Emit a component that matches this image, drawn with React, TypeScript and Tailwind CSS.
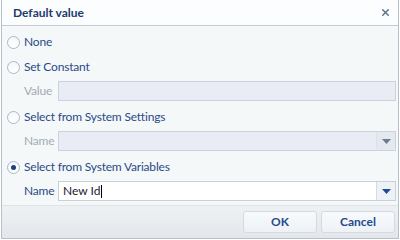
import { X } from 'lucide-react'

const FONT = "font-['Lato','Open_Sans',sans-serif]"

function Radio({ checked, label }: { checked?: boolean; label: string }) {
  return (
    <div className="flex h-[20px] items-center pl-[5px]">
      <span className="flex h-[13px] w-[13px] shrink-0 items-center justify-center rounded-full border border-[#a9b8c8] bg-gradient-to-b from-[#f4f7fa] to-[#ffffff]">
        {checked && <span className="h-[5px] w-[5px] rounded-full bg-[#1d3f7c]" />}
      </span>
      <span className="ml-[4px] text-[12px] leading-none tracking-[-0.2px] text-[#2a4a87]">{label}</span>
    </div>
  )
}

function Arrow({ enabled }: { enabled?: boolean }) {
  return (
    <svg width="9" height="5" viewBox="0 0 9 5">
      <path d="M0 0h9L4.5 5z" fill={enabled ? '#1c4e94' : '#6d7b8d'} />
    </svg>
  )
}

function Field({
  label,
  disabled,
  select,
  value,
}: {
  label: string
  disabled?: boolean
  select?: boolean
  value?: string
}) {
  return (
    <div className="flex h-[20px] items-center pl-[22px] pr-[2px]">
      <span
        className={`w-[34px] shrink-0 text-[12px] leading-none tracking-[-0.2px] ${
          disabled ? 'text-[#a3abb7]' : 'text-[#2a4a87]'
        }`}
      >
        {label}
      </span>
      <div
        className={`flex h-full flex-1 items-center border ${
          disabled ? 'border-[#cdd3de] bg-[#e9ecf5]' : 'border-[#c9d0da] bg-white'
        }`}
      >
        <div className="flex flex-1 items-center pl-[4px] text-[12px] leading-none text-[#1a2233]">
          {value}
          {value && <span className="ml-[1px] h-[13px] w-px bg-black" />}
        </div>
        {select && (
          <div
            className={`flex h-full w-[19px] items-center justify-center border-l ${
              disabled ? 'border-[#dde1ea] bg-[#e4e8ef]' : 'border-[#d6dbe3] bg-[#eef2f6]'
            }`}
          >
            <Arrow enabled={!disabled} />
          </div>
        )}
      </div>
    </div>
  )
}

function Button({ children }: { children: string }) {
  return (
    <button className="h-[22px] w-[74px] rounded-[3px] border border-[#d3dae2] bg-gradient-to-b from-[#f8fafc] to-[#eef2f6] text-[12px] font-bold text-[#1f4a8c]">
      {children}
    </button>
  )
}

export default function App() {
  return (
    <div className={`h-[240px] w-[400px] bg-white pl-px pr-px ${FONT}`}>
      <div className="flex h-[239px] flex-col border-x border-b border-[#b6c0cb]">
        <div className="flex h-[26px] items-center justify-between border-b border-[#c3cbd4] bg-[#fbfdfe] pl-[11px] pr-[7px]">
          <span className="text-[12px] font-bold leading-none text-[#1f3a6e]">Default value</span>
          <X size={11} strokeWidth={3} className="text-[#5b7089]" />
        </div>
        <div className="flex flex-1 flex-col bg-[#f4f8f9] pt-[6px]">
          <Radio label="None" />
          <div className="mt-[5px]">
            <Radio label="Set Constant" />
          </div>
          <div className="mt-[4px]">
            <Field label="Value" disabled />
          </div>
          <div className="mt-[6px]">
            <Radio label="Select from System Settings" />
          </div>
          <div className="mt-[4px]">
            <Field label="Name" disabled select />
          </div>
          <div className="mt-[6px]">
            <Radio checked label="Select from System Variables" />
          </div>
          <div className="mt-[4px]">
            <Field label="Name" select value="New Id" />
          </div>
        </div>
        <div className="flex h-[33px] items-center justify-end gap-[4px] border-t border-[#dfe4e9] bg-gradient-to-b from-[#eef1f4] to-[#e3e7eb] pr-[3px]">
          <Button>OK</Button>
          <Button>Cancel</Button>
        </div>
      </div>
    </div>
  )
}
